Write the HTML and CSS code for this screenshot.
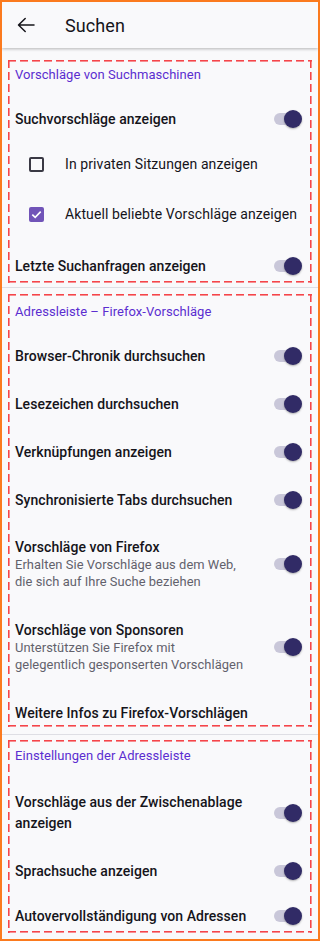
FILE: index.html
```html
<!DOCTYPE html>
<html lang="de">
<head>
<meta charset="utf-8">
<link rel="stylesheet" href="styles.css">
</head>
<body>
<div class="frame">
  <header class="topbar">
    <svg class="back" width="18" height="16" viewBox="0 0 18 16"><path d="M17 8H1.8M8.2 1.5L1.5 8l6.7 6.5" fill="none" stroke="#15141a" stroke-width="1.5" stroke-linecap="round" stroke-linejoin="round"/></svg>
    <span class="title">Suchen</span>
  </header>
  <main class="content">
    <section class="box box1">
      <div class="cat cat1">Vorschläge von Suchmaschinen</div>
      <div class="row r48"><span class="label">Suchvorschläge anzeigen</span><span class="switch"></span></div>
      <div class="row check rb"><span class="cb"></span><span class="ctext">In privaten Sitzungen anzeigen</span></div>
      <div class="row check rc"><span class="cb on"><svg width="11" height="9" viewBox="0 0 11 9"><path d="M1.3 4.6l2.9 2.8L9.7 1.6" fill="none" stroke="#fff" stroke-width="1.6"/></svg></span><span class="ctext">Aktuell beliebte Vorschläge anzeigen</span></div>
      <div class="row rd"><span class="label">Letzte Suchanfragen anzeigen</span><span class="switch"></span></div>
    </section>
    <div class="divider d1"></div>
    <section class="box box2">
      <div class="cat cat2">Adressleiste – Firefox-Vorschläge</div>
      <div class="row r48"><span class="label">Browser-Chronik durchsuchen</span><span class="switch"></span></div>
      <div class="row r48"><span class="label">Lesezeichen durchsuchen</span><span class="switch"></span></div>
      <div class="row r48"><span class="label">Verknüpfungen anzeigen</span><span class="switch"></span></div>
      <div class="row r48"><span class="label">Synchronisierte Tabs durchsuchen</span><span class="switch"></span></div>
      <div class="row multi rff">
        <div class="texts"><div class="label">Vorschläge von Firefox</div><div class="sub">Erhalten Sie Vorschläge aus dem Web,<br>die sich auf Ihre Suche beziehen</div></div>
        <span class="switch"></span>
      </div>
      <div class="row multi rsp">
        <div class="texts"><div class="label">Vorschläge von Sponsoren</div><div class="sub">Unterstützen Sie Firefox mit<br>gelegentlich gesponserten Vorschlägen</div></div>
        <span class="switch"></span>
      </div>
      <div class="row rmore"><span class="label">Weitere Infos zu Firefox-Vorschlägen</span></div>
    </section>
    <div class="divider d2"></div>
    <section class="box box3">
      <div class="cat cat3">Einstellungen der Adressleiste</div>
      <div class="row rclip"><span class="label two">Vorschläge aus der Zwischenablage<br>anzeigen</span><span class="switch"></span></div>
      <div class="row r48"><span class="label">Sprachsuche anzeigen</span><span class="switch"></span></div>
      <div class="row rauto"><span class="label">Autovervollständigung von Adressen</span><span class="switch"></span></div>
    </section>
  </main>
</div>
</body>
</html>
```
FILE: styles.css
```css
* { box-sizing: border-box; }
html, body { margin: 0; padding: 0; }
body {
  width: 320px;
  height: 941px;
  overflow: hidden;
  font-family: Roboto, "Noto Sans", sans-serif;
  color: #15141a;
  background: #f9f9fb;
}
.frame {
  width: 320px;
  height: 941px;
  border: 2px solid #fb7a1e;
  background: #f9f9fb;
  overflow: hidden;
}
.topbar {
  height: 46px;
  display: flex;
  align-items: center;
  background: #f9f9fb;
  box-shadow: 0 1px 3px rgba(0,0,0,0.28);
  position: relative;
  z-index: 1;
}
.back { margin-left: 15px; flex: none; }
.title { margin-left: 30px; font-size: 18px; font-weight: 400; letter-spacing: 0.1px; }
.content { padding: 0 6px; }
.box {
  background-image:
    repeating-linear-gradient(90deg, #f5454a 0 8px, transparent 8px 12px),
    repeating-linear-gradient(90deg, #f5454a 0 8px, transparent 8px 12px),
    repeating-linear-gradient(180deg, #f5454a 0 8px, transparent 8px 12px),
    repeating-linear-gradient(180deg, #f5454a 0 8px, transparent 8px 12px);
  background-size: 100% 1.6px, 100% 1.6px, 1.6px 100%, 1.6px 100%;
  background-position: left top, left bottom, left top, right top;
  background-repeat: no-repeat;
  padding: 0 7px;
}
.box1 { margin-top: 12px; height: 223px; padding-top: 1px; }
.box2 { margin-top: 6px; height: 433px; }
.box3 { margin-top: 5px; height: 193px; }
.divider { height: 1px; background: #dedee4; margin: 0 -6px; }
.d1 { margin-top: 4px; }
.d2 { margin-top: 7px; }
.cat { font-size: 13px; line-height: 16px; color: #5b2ed0; letter-spacing: 0.05px; }
.cat1 { height: 34px; padding-top: 6px; }
.cat2 { height: 38px; padding-top: 10px; }
.cat3 { height: 38px; padding-top: 8px; }
.row { display: flex; align-items: center; justify-content: space-between; }
.r48 { height: 48px; }
.rb { height: 42px; }
.rc { height: 58px; }
.rd { height: 40px; padding-top: 5px; }
.rff { height: 80px; }
.rsp { height: 82px; padding-top: 4px; }
.rmore { height: 41px; padding-top: 12px; }
.rclip { height: 69px; }
.rauto { height: 38px; padding-top: 4px; }
.label { font-size: 14px; font-weight: 500; line-height: 18px; letter-spacing: 0.05px; }
.label.two { line-height: 21px; }
.sub { font-size: 12.9px; line-height: 17px; color: #62616c; letter-spacing: 0.05px; }
.check { justify-content: flex-start; }
.cb {
  width: 15px; height: 15px;
  margin-left: 14px;
  border: 2px solid #3a3944;
  border-radius: 2px;
  flex: none;
  display: flex; align-items: center; justify-content: center;
}
.cb.on { background: #7154b8; border-color: #7154b8; }
.ctext { margin-left: 21px; font-size: 14px; font-weight: 400; letter-spacing: 0.1px; }
.switch {
  flex: none;
  width: 30px; height: 20px;
  margin-right: 1px;
  position: relative;
}
.switch::before {
  content: "";
  position: absolute;
  left: 0; top: 4px;
  width: 26px; height: 12px;
  border-radius: 6px;
  background: #c9c7d9;
}
.switch::after {
  content: "";
  position: absolute;
  right: 2px; top: 1px;
  width: 18px; height: 18px;
  border-radius: 50%;
  background: #312b66;
  box-shadow: 0 1px 2px rgba(0,0,0,0.3);
}
```
